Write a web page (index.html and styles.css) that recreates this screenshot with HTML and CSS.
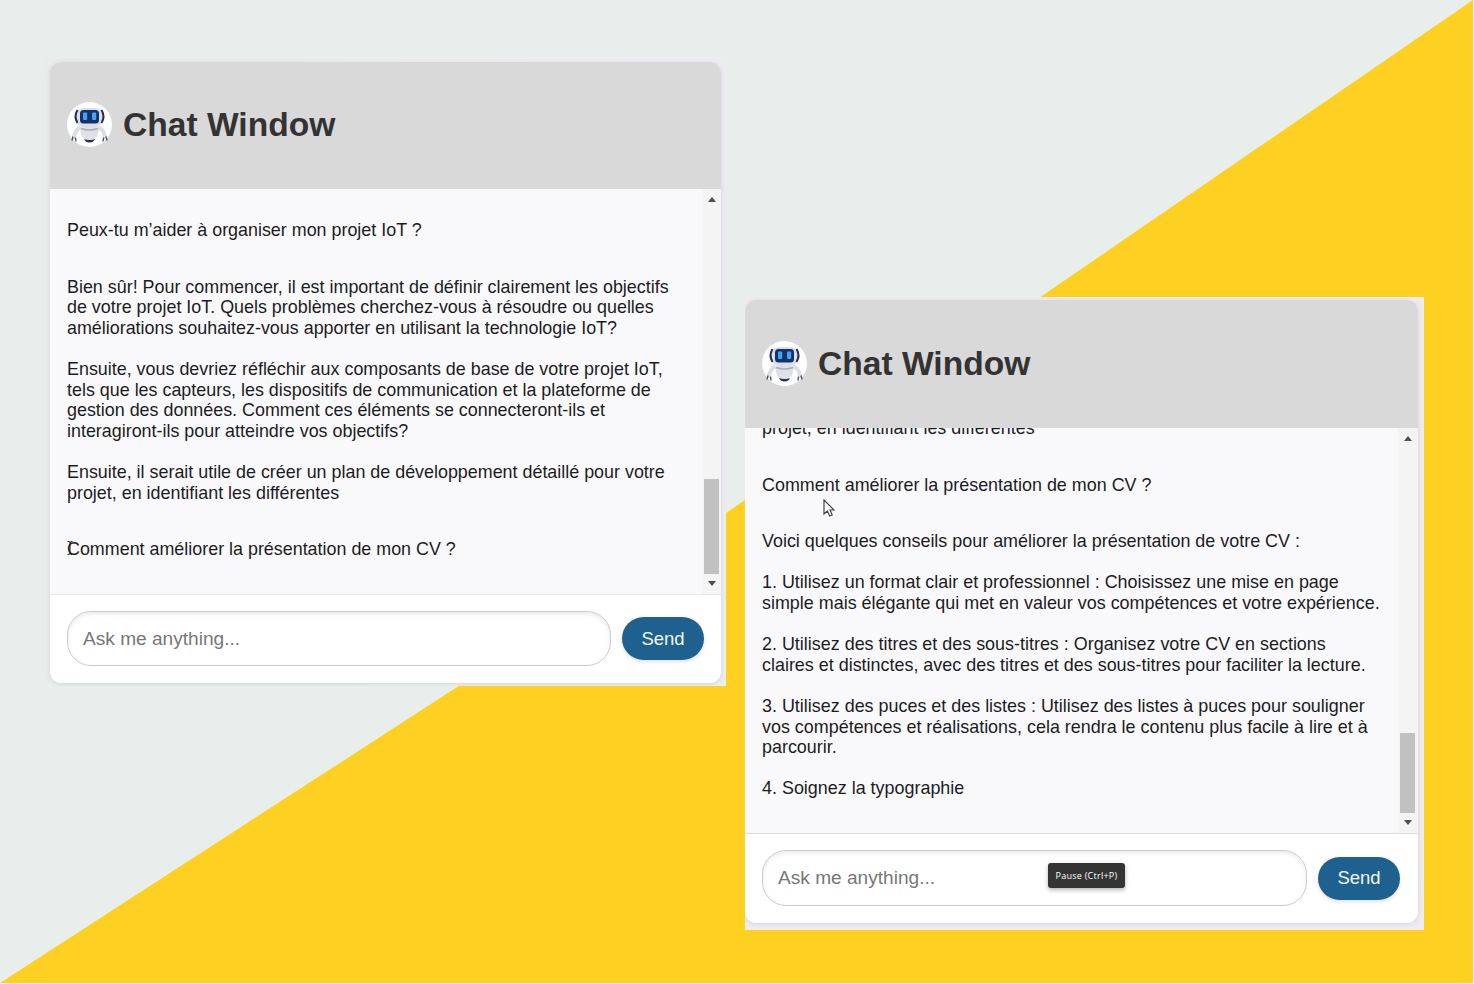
FILE: index.html
```html
<!DOCTYPE html>
<html lang="fr">
<head>
<meta charset="utf-8">
<title>Chat Window</title>
<link rel="stylesheet" href="styles.css">
</head>
<body>
<svg width="0" height="0" class="defs" aria-hidden="true">
  <symbol id="robot" viewBox="0 0 45 45">
    <circle cx="22.5" cy="22.5" r="22.5" fill="#fff"/>
    <path d="M12 26Q8 29 7 35M33 26q4 3 5 9" fill="none" stroke="#dcdee6" stroke-width="4" stroke-linecap="round"/>
    <path d="M6 34.500l-1 4M8.500 35.500l.500 4M39 34.500l1 4M36.500 35.500l-.500 4" stroke="#4d5269" stroke-width="1.400" fill="none"/>
    <path d="M12.500 25.500q10-1.500 20 0l-2.500 9.500q-7.500 6-15 0z" fill="#e0e1e6"/>
    <path d="M14 26.500q8.500 3 17 0" fill="none" stroke="#a9b1b5" stroke-width="1.500"/>
    <path d="M17 37q5.500 2 11 0-1.500 3.500-5.500 3.500T17 37z" fill="#26345c"/>
    <rect x="9.500" y="6" width="26" height="19" rx="7" fill="#dcdfe5"/>
    <rect x="13" y="8" width="19" height="13.500" rx="3.500" fill="#13326d"/>
    <path d="M10.500 8Q6.500 14.500 10.500 21M34.500 8q4 6.500 0 13" fill="none" stroke="#252e50" stroke-width="2"/>
    <rect x="16" y="10.500" width="4.200" height="7.500" rx="1" fill="#42a4e9"/>
    <rect x="25" y="10.500" width="4.200" height="7.500" rx="1" fill="#42a4e9"/>
  </symbol>
</svg>
<main class="stage">
  <svg class="backdrop" viewBox="0 0 1474 984"><path d="M1473 0V983H0L726 513Z" fill="#fdd022"/></svg>

  <section class="shot shot-left">
    <div class="chat">
      <header class="chat-header"><svg class="avatar"><use href="#robot"/></svg><h1>Chat Window</h1></header>
      <div class="chat-body">
        <div class="messages">
          <p>Peux-tu m’aider à organiser mon projet IoT ?</p>
          <p>Bien sûr! Pour commencer, il est important de définir clairement les objectifs<br>de votre projet IoT. Quels problèmes cherchez-vous à résoudre ou quelles<br>améliorations souhaitez-vous apporter en utilisant la technologie IoT?<br><br>Ensuite, vous devriez réfléchir aux composants de base de votre projet IoT,<br>tels que les capteurs, les dispositifs de communication et la plateforme de<br>gestion des données. Comment ces éléments se connecteront-ils et<br>interagiront-ils pour atteindre vos objectifs?<br><br>Ensuite, il serait utile de créer un plan de développement détaillé pour votre<br>projet, en identifiant les différentes</p>
          <p>Comment améliorer la présentation de mon CV ?</p>
        </div>
        <div class="scrollbar"><i class="up"></i><i class="thumb"></i><i class="down"></i></div>
      </div>
      <footer class="chat-footer"><div class="field">Ask me anything...</div><button class="send">Send</button></footer>
    </div>
    <svg class="ibeam" viewBox="0 0 6 16"><path d="M.500 1.500Q3 1 3 3V13Q3 15 .500 14.500M5.500 1.500Q3 1 3 3M3 13q0 2 2.500 1.500" fill="none" stroke="#222" stroke-width="1"/></svg>
  </section>

  <section class="shot shot-right">
    <div class="chat">
      <header class="chat-header"><svg class="avatar"><use href="#robot"/></svg><h1>Chat Window</h1></header>
      <div class="chat-body">
        <div class="messages">
          <p>projet, en identifiant les différentes</p>
          <p>Comment améliorer la présentation de mon CV ?</p>
          <p>Voici quelques conseils pour améliorer la présentation de votre CV :<br><br>1. Utilisez un format clair et professionnel : Choisissez une mise en page<br>simple mais élégante qui met en valeur vos compétences et votre expérience.<br><br>2. Utilisez des titres et des sous-titres : Organisez votre CV en sections<br>claires et distinctes, avec des titres et des sous-titres pour faciliter la lecture.<br><br>3. Utilisez des puces et des listes : Utilisez des listes à puces pour souligner<br>vos compétences et réalisations, cela rendra le contenu plus facile à lire et à<br>parcourir.<br><br>4. Soignez la typographie</p>
        </div>
        <div class="scrollbar"><i class="up"></i><i class="thumb"></i><i class="down"></i></div>
      </div>
      <footer class="chat-footer"><div class="field">Ask me anything...</div><button class="send">Send</button></footer>
    </div>
    <svg class="pointer" viewBox="0 0 12 18"><path d="M1 1V15L4.300 12 6.700 17 9.200 16 7 11H11Z" fill="#fff" stroke="#444" stroke-width="1.200"/></svg>
    <div class="tooltip">Pause (Ctrl+P)</div>
  </section>
</main>
</body>
</html>
```
FILE: styles.css
```css
* { box-sizing: border-box; }
body { margin: 0; background: #fff; font-family: "Liberation Sans", Arial, sans-serif; }
.defs { position: absolute; }
.stage { position: relative; width: 1474px; height: 984px; overflow: hidden; background: #e7eeec; }
.backdrop { position: absolute; inset: 0; width: 1474px; height: 984px; }
.shot { position: absolute; overflow: hidden; }
.shot-left { left: 45px; top: 58px; width: 681px; height: 628px; padding: 4px 5px 3px; background: linear-gradient(90deg, #e8edec, #eceef0 60%, #ececf2); }
.shot-right { left: 745px; top: 297px; width: 679px; height: 633px; padding: 3px 6px 7px 0; background: #ececf1; }
.chat { display: flex; flex-direction: column; height: 100%; border-radius: 11px; overflow: hidden; background: #fff; box-shadow: 0 1px 5px rgba(0, 0, 0, .1); }
.chat-header { display: flex; align-items: center; gap: 11px; flex: none; height: 127px; padding: 0 17px 2px; background: #d9d9d9; }
.shot-right .chat-header { height: 128px; padding-bottom: 1px; }
.avatar { width: 45px; height: 45px; }
h1 { margin: 0; font-size: 33.600px; line-height: 40px; color: #333; white-space: nowrap; }
.chat-body { display: flex; flex: 1; min-height: 0; overflow: hidden; background: #f9f9fc; border-bottom: 1px solid #e9e9eb; }
.shot-right .chat-body { border-bottom-color: #dcdcdf; }
.messages { display: flex; flex: 1; flex-direction: column; justify-content: flex-end; gap: 36px; min-width: 0; padding: 0 0 34px 17px; font-size: 17.900px; line-height: 20.600px; color: #1c1c1e; white-space: nowrap; }
.shot-right .messages { font-size: 17.930px; }
.messages p { margin: 0; }
.scrollbar { display: flex; flex-direction: column; align-items: center; flex: none; width: 19px; padding: 8px 2px; background: #f4f4f5; }
.shot-right .scrollbar { width: 20px; padding-right: 3px; }
.up, .down { width: 0; height: 0; border: 4.500px solid transparent; }
.up { border-top: 0; border-bottom: 5px solid #4d4d4d; margin-bottom: auto; }
.down { border-bottom: 0; border-top: 5px solid #4d4d4d; margin-top: 7px; }
.thumb { width: 15px; height: 95px; background: #c1c1c1; }
.shot-right .thumb { height: 80px; }
.chat-footer { display: flex; align-items: center; gap: 11px; flex: none; height: 88px; padding: 0 17px 1px; }
.shot-right .chat-footer { height: 89px; padding: 0 18px 1px 17px; }
.field { display: flex; align-items: center; flex: 1; height: 55px; padding-left: 15px; border: 1px solid #ccc; border-radius: 24px; box-shadow: inset 0 2px 4px rgba(0, 0, 0, .09); font-size: 19.100px; color: #777; }
.shot-right .field { height: 56px; }
.send { width: 82px; height: 43px; padding: 0; border: 0; border-radius: 22px; background: #1e608e; box-shadow: 0 2px 4px rgba(0, 0, 0, .12); font: 18.500px "Liberation Sans", Arial, sans-serif; color: #f2f7fa; }
.ibeam { position: absolute; left: 22px; top: 482px; width: 6px; height: 16px; }
.pointer { position: absolute; left: 78px; top: 202px; width: 12px; height: 18px; }
.tooltip { position: absolute; left: 303px; top: 566px; width: 77px; height: 25px; border-radius: 3px; background: #343434; box-shadow: 0 2px 4px rgba(0, 0, 0, .3); font: 9px/25px "Open Sans", sans-serif; letter-spacing: .25px; text-align: center; color: #fff; white-space: nowrap; }
```
